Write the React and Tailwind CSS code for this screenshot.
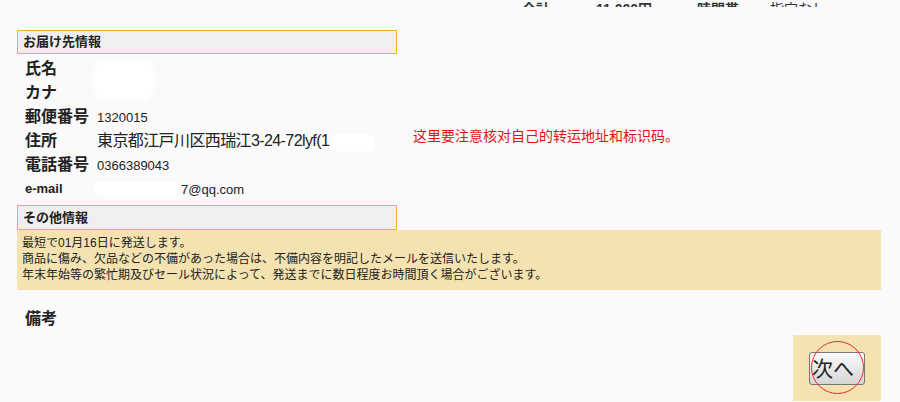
import React from "react";

const font = { fontFamily: '"Liberation Sans", "Noto Sans CJK JP", "Noto Sans", sans-serif' };

function Row({ label, labelClass = "text-[16px]", children }) {
  return (
    <div className="flex items-center h-[24px] pl-[25px]">
      <div className={`w-[72px] font-bold text-[#222] ${labelClass}`}>{label}</div>
      <div className="text-[#222]">{children}</div>
    </div>
  );
}

export default function App() {
  return (
    <div
      className="relative w-[900px] h-[402px] overflow-hidden bg-[#fafafa] text-[#222]"
      style={font}
    >
      {/* cut-off summary line at very top */}
      <div className="h-[7px] overflow-hidden flex items-end">
        <div className="flex text-[14px] leading-[16px] font-bold text-[#333] pl-[522px] translate-y-[10px]">
          <span className="w-[74px]">合計</span>
          <span className="w-[101px]">11,000円</span>
          <span className="w-[73px]">時間帯</span>
          <span className="font-normal">指定なし</span>
        </div>
      </div>

      <div className="mt-[23px] ml-[17px] w-[380px] h-[24px] border border-[#f0b12e] bg-[#efefef] px-[5px] text-[13px] leading-[22px] font-bold text-[#222]">
        お届け先情報
      </div>

      <div className="mt-[3px]">
        <Row label="氏名"><span className="text-[13px]">&nbsp;</span></Row>
        <Row label="カナ"><span className="text-[13px]">&nbsp;</span></Row>
        <Row label="郵便番号"><span className="text-[13px]">1320015</span></Row>
        <Row label="住所"><span className="text-[16px] tracking-[-0.6px]">東京都江戸川区西瑞江3-24-72lyf(1</span></Row>
        <Row label="電話番号"><span className="text-[13px]">0366389043</span></Row>
        <Row label="e-mail" labelClass="text-[13px]">
          <span className="text-[13px] pl-[84px]">7@qq.com</span>
        </Row>
      </div>

      <div className="mt-[4px] ml-[17px] w-[380px] h-[25px] border border-[#f0b12e] bg-[#efefef] px-[5px] text-[13px] leading-[23px] font-bold text-[#222]">
        その他情報
      </div>

      <div className="ml-[17px] w-[864px] h-[60px] bg-[#f4e2b0] px-[5px] pt-[5px] text-[12px] leading-[16px] text-[#222]">
        <div>最短で01月16日に発送します。</div>
        <div>商品に傷み、欠品などの不備があった場合は、不備内容を明記したメールを送信いたします。</div>
        <div>年末年始等の繁忙期及びセール状況によって、発送までに数日程度お時間頂く場合がございます。</div>
      </div>

      <div className="mt-[19px] pl-[25px] text-[16px] leading-[20px] font-bold text-[#222]">備考</div>

      <div className="flex justify-end pr-[19px] mt-[6px]">
        <div className="w-[88px] h-[66px] bg-[#f4e2b0] pl-[16px] pt-[17px] overflow-hidden">
          <button className="w-[56px] h-[33px] rounded-[3px] border border-[#777] bg-gradient-to-b from-[#fbfbfb] to-[#d6d6d6] text-[21px] leading-[28px] text-[#222] pl-[2px] text-left">
            次へ
          </button>
        </div>
      </div>

      {/* privacy blur patches */}
      <div className="absolute left-[94px] top-[60px] w-[60px] h-[40px] rounded-[12px] bg-white blur-[2px]" />
      <div className="absolute left-[331px] top-[134px] w-[44px] h-[18px] rounded-[6px] bg-white blur-[1px]" />
      <div className="absolute left-[94px] top-[182px] w-[86px] h-[15px] rounded-[5px] bg-white blur-[1px]" />

      {/* annotation */}
      <div className="absolute left-[413px] top-[127px] text-[14px] leading-[18px] text-[#e21010]">
        这里要注意核对自己的转运地址和标识码。
      </div>
      <div className="absolute left-[811px] top-[341px] w-[53px] h-[53px] rounded-full border border-[#ee2a2a]" />
    </div>
  );
}
